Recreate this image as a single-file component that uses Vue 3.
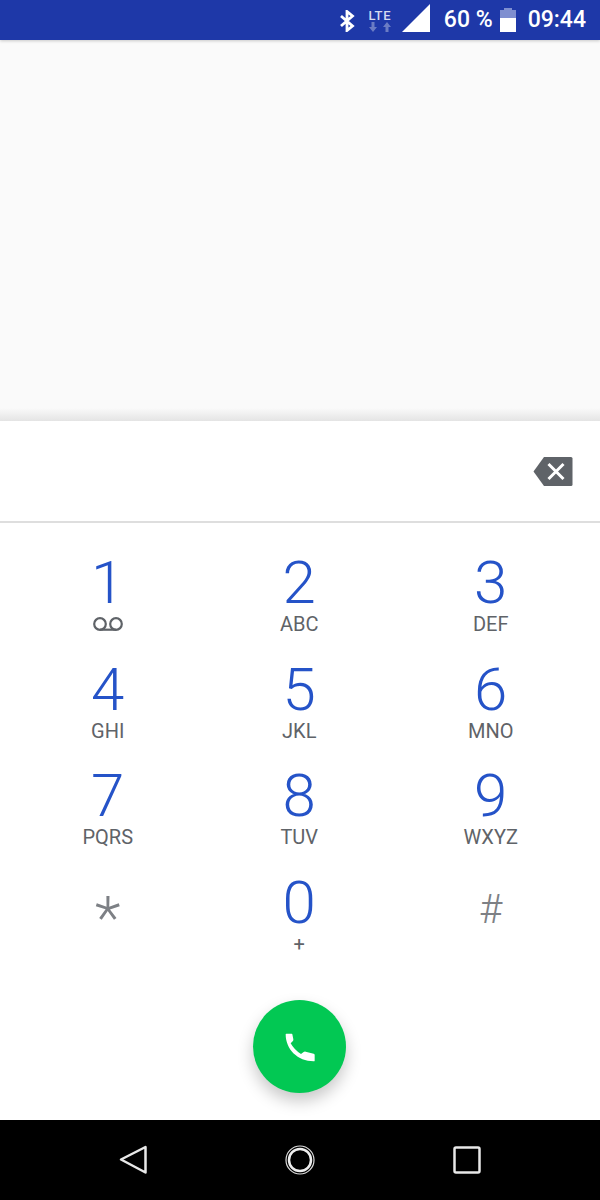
<script setup>
const keys = [
  { digit: '1', voicemail: true },
  { digit: '2', sub: 'ABC' },
  { digit: '3', sub: 'DEF' },
  { digit: '4', sub: 'GHI' },
  { digit: '5', sub: 'JKL' },
  { digit: '6', sub: 'MNO' },
  { digit: '7', sub: 'PQRS' },
  { digit: '8', sub: 'TUV' },
  { digit: '9', sub: 'WXYZ' },
  { digit: '*', symbol: 'star' },
  { digit: '0', sub: '+' },
  { digit: '#', symbol: 'hash' }
]
</script>

<template>
  <div class="screen">
    <header class="status-bar">
      <svg class="bt" width="16" height="22" viewBox="0 0 16 22">
        <path d="M2 6l11.500 10L8 20.500v-19L13.500 6 2 16" fill="none" stroke="#fff" stroke-width="2.800" />
      </svg>
      <div class="lte">
        <span class="lte-text">LTE</span>
        <svg width="24" height="10" viewBox="0 0 24 10">
          <path d="M3.500 0h3v5H9L5 10 1 5h2.500zM17.500 10h3V5H23L19 0l-4 5h2.500z" fill="#6b7cc4" />
        </svg>
      </div>
      <svg class="signal" width="28" height="28" viewBox="0 0 28 28">
        <path d="M28 0v28H0z" fill="#fff" />
      </svg>
      <span class="pct">60 %</span>
      <div class="battery">
        <div class="battery-tip"></div>
        <div class="battery-empty"></div>
        <div class="battery-fill"></div>
      </div>
      <span class="clock">09:44</span>
    </header>

    <div class="recents"></div>

    <main class="dialpad">
      <div class="number-row">
        <svg width="40" height="31" viewBox="0 0 40 31">
          <path d="M11 1h27a1.500 1.500 0 0 1 1.500 1.500v26a1.500 1.500 0 0 1-1.500 1.500H11L.5 15.500z" fill="#5f6368" />
          <path d="M15.500 8l15 15M30.500 8l-15 15" stroke="#fff" stroke-width="3" />
        </svg>
      </div>

      <div class="keys">
        <div v-for="key in keys" :key="key.digit" class="key">
          <span class="digit" :class="key.symbol">{{ key.digit }}</span>
          <svg v-if="key.voicemail" class="vm" width="30" height="14" viewBox="0 0 30 14">
            <circle cx="7" cy="7" r="5.800" fill="none" stroke="#5f6368" stroke-width="2.200" />
            <circle cx="23" cy="7" r="5.800" fill="none" stroke="#5f6368" stroke-width="2.200" />
            <path d="M7 12.700h16" stroke="#5f6368" stroke-width="2.200" />
          </svg>
          <span v-else-if="key.sub" class="sub">{{ key.sub }}</span>
        </div>
      </div>

      <div class="call-row">
        <button class="call">
          <svg width="50" height="50" viewBox="0 0 150 150">
            <path d="M32 37Q32 35 34 35H50Q52 35 52 37L55 52Q56 55 53 58L47 64Q58 84 78 96L85 91Q88 88 92 89L116 95Q119 96 119 98V116Q119 118 116 118C68 118 32 82 32 37Z" fill="#fff" />
          </svg>
        </button>
      </div>
    </main>

    <nav class="nav-bar">
      <svg width="30" height="32" viewBox="0 0 30 32">
        <path d="M27.500 3v25.500L3 15.500z" fill="none" stroke="#e8e8e8" stroke-width="2.500" stroke-linejoin="round" />
      </svg>
      <svg width="30" height="30" viewBox="0 0 30 30">
        <circle cx="15" cy="15" r="14" fill="none" stroke="#ddd" stroke-width="1.200" />
        <circle cx="15" cy="15" r="11" fill="none" stroke="#eee" stroke-width="2.500" />
      </svg>
      <svg width="28" height="28" viewBox="0 0 28 28">
        <rect x="1.500" y="1.500" width="25" height="25" rx="1.500" fill="none" stroke="#e8e8e8" stroke-width="2.500" />
      </svg>
    </nav>
  </div>
</template>

<style scoped>
.screen {
  width: 600px;
  height: 1200px;
  display: flex;
  flex-direction: column;
  font-family: Roboto, "Liberation Sans", sans-serif;
  background: #fff;
  overflow: hidden;
}

.status-bar {
  height: 40px;
  flex: none;
  background: #1e38a8;
  display: flex;
  align-items: center;
  justify-content: flex-end;
  padding-right: 14px;
  color: #fff;
  box-shadow: 0 1px 3px rgba(0, 0, 0, 0.2);
  position: relative;
}

.bt {
  margin-top: 2px;
}

.lte {
  display: flex;
  flex-direction: column;
  align-items: center;
  width: 24px;
  margin-left: 13px;
}

.lte-text {
  font-size: 13px;
  line-height: 13px;
  letter-spacing: 0.6px;
  font-weight: 500;
  color: #d5daf0;
}

.signal {
  margin-left: 10px;
  margin-top: -4px;
}

.pct,
.clock {
  font-size: 23px;
  font-weight: 500;
  line-height: 40px;
}

.pct {
  margin-left: 14px;
}

.battery {
  width: 16px;
  height: 24px;
  margin-left: 7px;
  display: flex;
  flex-direction: column;
  align-items: center;
}

.battery-tip {
  width: 8px;
  height: 2px;
  background: #7f8fd0;
}

.battery-empty {
  width: 16px;
  height: 8px;
  background: #7f8fd0;
}

.battery-fill {
  width: 16px;
  height: 14px;
  background: #fff;
}

.clock {
  margin-left: 12px;
}

.recents {
  height: 381px;
  flex: none;
  background: linear-gradient(to bottom, #fafafa 0, #fafafa 368px, #e4e4e4 381px);
}

.dialpad {
  flex: 1;
  display: flex;
  flex-direction: column;
  background: #fff;
}

.number-row {
  height: 102px;
  flex: none;
  box-sizing: border-box;
  display: flex;
  align-items: center;
  justify-content: flex-end;
  padding: 0 27px 0 0;
  border-bottom: 2px solid #dedede;
}

.keys {
  display: grid;
  grid-template-columns: repeat(3, 191.5px);
  grid-auto-rows: 106.500px;
  padding: 30px 0 0 12px;
}

.key {
  display: flex;
  flex-direction: column;
  align-items: center;
}

.digit {
  font-size: 60px;
  font-weight: 300;
  line-height: 60px;
  color: #2553c8;
}

.digit.star {
  color: #7d8085;
  margin-top: 15px;
}

.digit.hash {
  font-size: 40px;
  color: #7d8085;
  margin-top: 7px;
}

.sub {
  font-size: 20px;
  line-height: 22px;
  color: #5f6368;
}

.vm {
  margin-top: 4px;
}

.call-row {
  display: flex;
  justify-content: center;
  padding: 21px 1px 0 0;
}

.call {
  width: 93px;
  height: 93px;
  padding: 0;
  border: 0;
  border-radius: 50%;
  background: #02c853;
  box-shadow: 0 8px 16px rgba(0, 0, 0, 0.22);
  display: flex;
  align-items: center;
  justify-content: center;
}

.nav-bar {
  height: 80px;
  flex: none;
  background: #000;
  display: grid;
  grid-template-columns: repeat(3, 167px);
  justify-content: center;
  justify-items: center;
  align-items: center;
}
</style>
